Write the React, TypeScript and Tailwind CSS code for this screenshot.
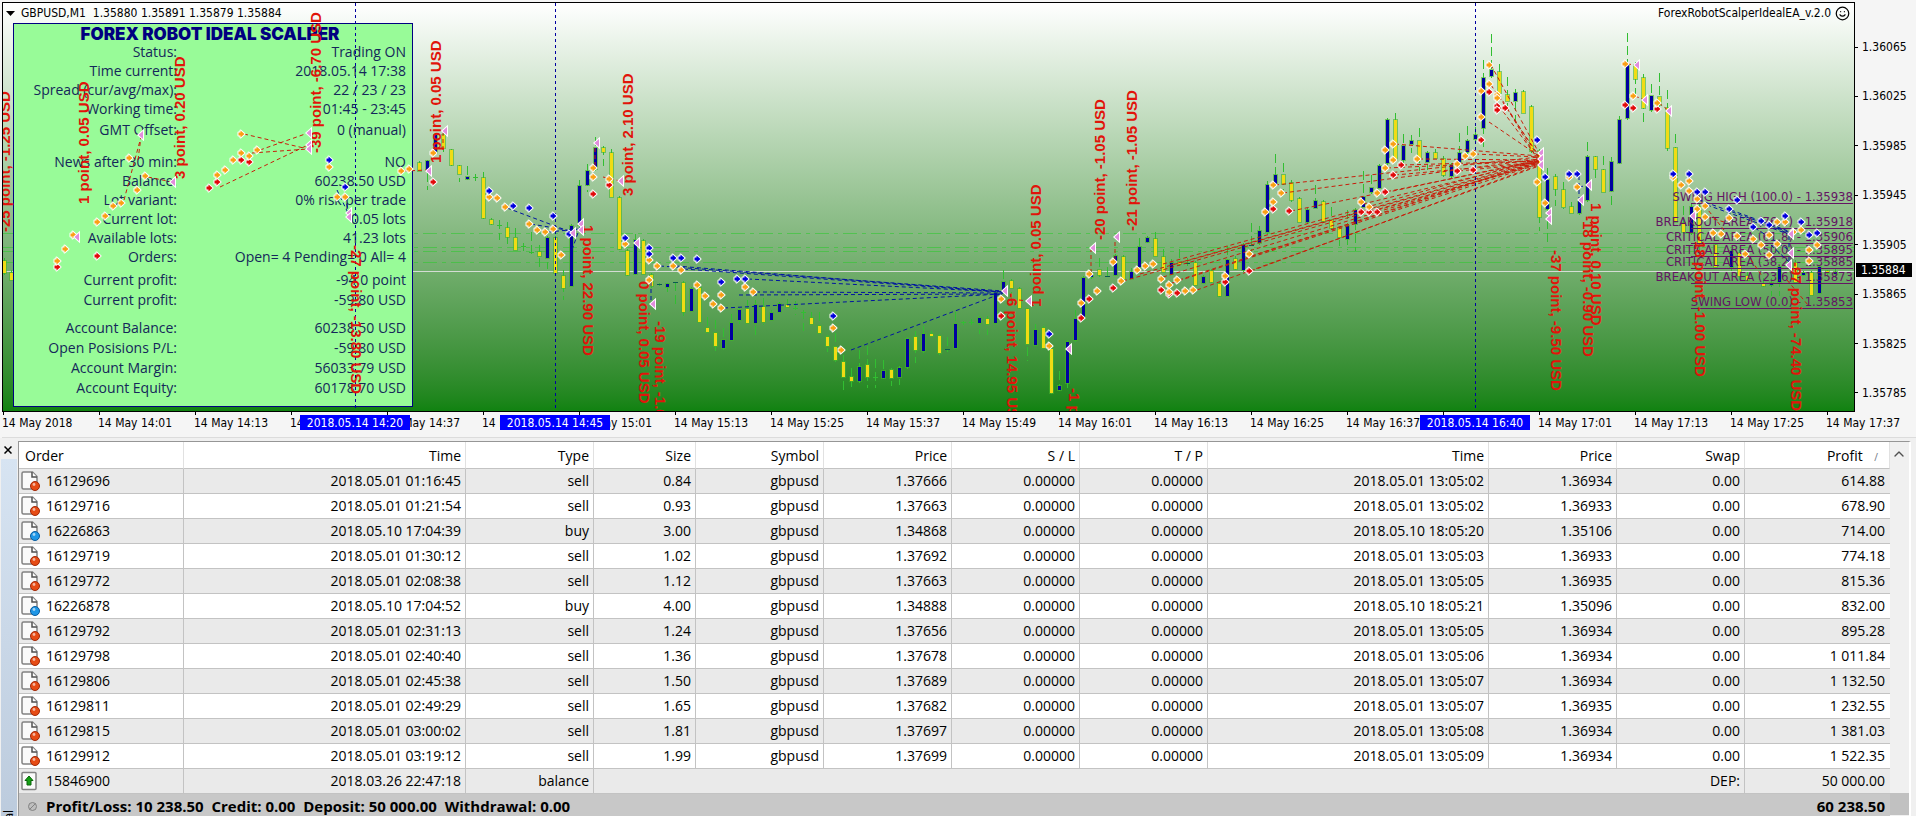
import { ChevronUp, Smile } from 'lucide-react';

type Candle = [x: number, high: number, top: number, bottom: number, low: number, up: 0 | 1];
type Point = [x: number, y: number];
type Segment = [x1: number, y1: number, x2: number, y2: number];

const candles: Candle[] = [
  [4, 258, 261, 273, 275, 0], [11, 270, 273, 280, 282, 0],
  [419, 161, 163, 171, 172, 0], [427, 160, 161, 170, 190, 1], [435, 133, 135, 153, 156, 1], [443, 130, 135, 148, 153, 0],
  [451, 149, 150, 165, 166, 0], [459, 165, 166, 174, 182, 0], [467, 166, 177, 179, 180, 1], [475, 174, 177, 178, 181, 0],
  [483, 172, 178, 218, 219, 0], [491, 218, 220, 224, 225, 0], [499, 220, 225, 226, 240, 0], [507, 222, 228, 237, 246, 0],
  [515, 228, 238, 250, 251, 0], [523, 243, 246, 247, 251, 0], [531, 232, 252, 253, 254, 0], [539, 245, 252, 256, 271, 0],
  [547, 236, 238, 258, 269, 1], [555, 236, 238, 273, 276, 0], [563, 270, 276, 288, 300, 0], [571, 224, 226, 286, 288, 1],
  [579, 180, 186, 225, 227, 1], [587, 164, 171, 185, 192, 1], [595, 137, 148, 169, 171, 1], [603, 146, 148, 152, 166, 0],
  [611, 149, 153, 197, 199, 0], [619, 196, 198, 249, 250, 0], [627, 249, 251, 275, 276, 0], [635, 234, 240, 274, 275, 1],
  [643, 239, 241, 274, 275, 0], [651, 273, 275, 286, 288, 0], [659, 283, 284, 285, 286, 1], [667, 283, 284, 287, 296, 1],
  [675, 282, 282, 283, 305, 1], [683, 281, 283, 312, 316, 0], [691, 287, 289, 311, 312, 1], [699, 286, 288, 322, 324, 0],
  [707, 317, 328, 332, 333, 0], [715, 320, 333, 346, 351, 0], [723, 328, 340, 348, 354, 1], [731, 314, 323, 340, 341, 1],
  [739, 308, 310, 320, 324, 1], [747, 300, 309, 323, 326, 0], [755, 300, 305, 323, 335, 1], [763, 298, 307, 322, 325, 0],
  [771, 310, 313, 320, 322, 1], [779, 302, 304, 312, 314, 1], [787, 299, 305, 307, 308, 0], [795, 301, 308, 309, 315, 0],
  [803, 310, 312, 313, 331, 0], [811, 312, 318, 324, 325, 0], [819, 312, 326, 333, 334, 0], [827, 335, 337, 346, 352, 0],
  [835, 333, 347, 360, 362, 0], [843, 355, 362, 377, 393, 0], [851, 368, 377, 381, 387, 0], [859, 350, 367, 381, 383, 1],
  [867, 346, 365, 377, 388, 0], [875, 359, 377, 378, 388, 0], [883, 360, 371, 378, 379, 1], [891, 368, 370, 378, 386, 0],
  [899, 366, 368, 377, 385, 1], [907, 337, 339, 367, 369, 1], [915, 331, 337, 350, 363, 0], [923, 326, 334, 351, 353, 1],
  [931, 331, 334, 336, 337, 0], [939, 334, 336, 353, 355, 0], [947, 337, 349, 350, 352, 1], [955, 312, 324, 348, 350, 1],
  [963, 321, 322, 323, 325, 0], [971, 319, 322, 323, 325, 0], [979, 316, 318, 323, 334, 1], [987, 316, 319, 324, 335, 0],
  [995, 291, 293, 323, 324, 1], [1003, 270, 282, 292, 294, 1], [1011, 279, 281, 288, 300, 0], [1019, 287, 289, 308, 310, 0],
  [1027, 308, 309, 344, 361, 0], [1035, 324, 330, 345, 347, 1], [1043, 326, 328, 348, 350, 0], [1051, 347, 349, 393, 394, 0],
  [1059, 371, 386, 390, 391, 1], [1067, 340, 342, 383, 389, 1], [1075, 310, 319, 340, 342, 1], [1083, 276, 278, 317, 320, 1],
  [1091, 270, 273, 277, 279, 1], [1099, 258, 270, 275, 277, 0], [1107, 267, 276, 277, 278, 1], [1115, 254, 256, 275, 277, 1],
  [1123, 255, 257, 279, 281, 0], [1131, 268, 272, 279, 280, 1], [1139, 238, 247, 267, 270, 1], [1147, 236, 238, 242, 243, 1],
  [1155, 232, 239, 256, 258, 0], [1163, 249, 257, 272, 274, 0], [1171, 259, 263, 274, 275, 1], [1179, 249, 262, 264, 266, 0],
  [1187, 258, 263, 264, 266, 1], [1195, 261, 263, 285, 286, 0], [1203, 275, 277, 283, 284, 1], [1211, 269, 271, 282, 283, 0],
  [1219, 282, 284, 296, 297, 0], [1227, 246, 260, 296, 297, 1], [1235, 256, 259, 269, 270, 0], [1243, 243, 245, 270, 272, 1],
  [1251, 223, 245, 246, 252, 1], [1259, 226, 231, 243, 245, 1], [1267, 181, 185, 232, 234, 1], [1275, 154, 175, 184, 186, 1],
  [1283, 163, 175, 184, 190, 0], [1291, 180, 183, 200, 202, 0], [1299, 197, 199, 222, 223, 0], [1307, 208, 210, 222, 224, 1],
  [1315, 185, 201, 208, 210, 1], [1323, 200, 202, 221, 222, 0], [1331, 207, 220, 228, 230, 0], [1339, 227, 228, 237, 246, 0],
  [1347, 210, 226, 239, 250, 1], [1355, 208, 210, 224, 251, 1], [1363, 171, 197, 207, 209, 1], [1371, 175, 188, 192, 194, 1],
  [1379, 164, 166, 188, 190, 1], [1387, 118, 120, 163, 165, 1], [1395, 113, 120, 160, 162, 0], [1403, 134, 146, 160, 166, 1],
  [1411, 135, 141, 144, 153, 1], [1419, 128, 141, 159, 171, 0], [1427, 151, 153, 162, 170, 1], [1435, 149, 153, 158, 162, 0],
  [1443, 156, 159, 175, 177, 0], [1451, 163, 165, 176, 178, 1], [1459, 133, 153, 162, 166, 1], [1467, 126, 141, 152, 154, 1],
  [1475, 127, 135, 139, 141, 1], [1483, 60, 78, 128, 148, 1], [1491, 34, 70, 76, 78, 1], [1499, 64, 72, 93, 96, 0],
  [1507, 77, 95, 101, 106, 0], [1515, 89, 93, 101, 122, 1], [1523, 90, 92, 113, 115, 0], [1531, 105, 107, 151, 153, 0],
  [1539, 149, 151, 217, 231, 0], [1547, 168, 180, 209, 245, 1], [1555, 174, 177, 189, 206, 0], [1563, 182, 190, 207, 209, 0],
  [1571, 202, 207, 213, 215, 0], [1579, 198, 201, 213, 215, 1], [1587, 142, 157, 200, 202, 1], [1595, 156, 157, 169, 182, 0],
  [1603, 156, 170, 192, 194, 0], [1611, 157, 162, 191, 208, 1], [1619, 116, 120, 163, 166, 1], [1627, 33, 65, 118, 120, 1],
  [1635, 62, 65, 79, 95, 0], [1643, 74, 78, 108, 125, 0], [1651, 84, 96, 110, 112, 1], [1659, 73, 97, 105, 107, 0],
  [1667, 90, 108, 148, 154, 0], [1675, 134, 148, 222, 224, 0], [1683, 206, 223, 232, 233, 0], [1691, 204, 207, 233, 235, 1],
  [1699, 203, 207, 243, 260, 0], [1715, 243, 245, 267, 268, 0], [1731, 249, 251, 267, 276, 1], [1739, 250, 253, 276, 280, 0],
  [1747, 272, 276, 280, 282, 0], [1763, 278, 284, 286, 290, 0], [1771, 278, 283, 285, 296, 1], [1779, 265, 267, 282, 296, 1],
  [1795, 260, 263, 282, 284, 0], [1803, 271, 273, 275, 276, 1], [1811, 271, 273, 295, 296, 0], [1819, 265, 267, 293, 294, 1],
  [1827, 270, 271, 273, 277, 0], [1835, 269, 272, 274, 278, 1],
];

const orangeArrows: Point[] = [
  [241, 134], [129, 158], [145, 176], [137, 190], [121, 203], [113, 206], [105, 216], [97, 222], [73, 235], [65, 249], [57, 261],
  [241, 153], [249, 156], [257, 150], [233, 160], [225, 170], [217, 175], [329, 167], [337, 197], [345, 197], [401, 171],
  [409, 169], [433, 153], [489, 197], [497, 198], [505, 207], [529, 224], [537, 230], [545, 232], [553, 229], [561, 255],
  [593, 168], [593, 177], [609, 179], [625, 244], [649, 260], [657, 266], [673, 266], [681, 270], [649, 280], [697, 285],
  [705, 296], [713, 304], [721, 295], [721, 308], [745, 287], [753, 292], [833, 328], [841, 350], [1001, 299], [1049, 346],
  [1081, 303], [1089, 274], [1097, 291], [1113, 262], [1121, 281], [1137, 270], [1145, 266], [1153, 264], [1161, 279],
  [1169, 285], [1177, 280], [1169, 292], [1185, 291], [1193, 290], [1249, 254], [1225, 276], [1265, 212], [1273, 185],
  [1281, 193], [1273, 202], [1361, 202], [1369, 207], [1377, 193], [1385, 150], [1393, 144], [1393, 160], [1385, 168],
  [1417, 159], [1457, 164], [1465, 156], [1473, 154], [1481, 91], [1481, 117], [1489, 65], [1489, 84], [1497, 95], [1497, 98],
  [1537, 182], [1545, 203], [1569, 177], [1577, 187], [1625, 64], [1633, 96], [1657, 103], [1673, 177], [1681, 185],
  [1689, 181], [1689, 191], [1697, 199], [1705, 206], [1697, 209], [1705, 217], [1713, 233], [1721, 234], [1729, 218],
  [1777, 222], [1785, 222], [1769, 235], [1753, 239], [1761, 245], [1793, 232], [1801, 230], [1809, 250], [1809, 261],
  [1817, 245], [1777, 244], [1769, 255], [1745, 254], [1737, 236],
];

const redArrows: Point[] = [
  [57, 267], [97, 256], [241, 160], [249, 162], [217, 182], [209, 188], [433, 182], [593, 194], [609, 185], [1001, 316],
  [1081, 318], [1089, 299], [1113, 288], [1161, 290], [1169, 294], [1177, 293], [1225, 282], [1249, 271], [1273, 209],
  [1289, 211], [1361, 212], [1369, 212], [1377, 212], [1385, 192], [1393, 175], [1401, 165], [1457, 171], [1473, 170],
  [1481, 140], [1489, 92], [1497, 106], [1497, 110], [1505, 108], [1625, 105], [1633, 108], [1657, 109],
];

const blueArrows: Point[] = [
  [329, 160], [345, 187], [489, 191], [513, 206], [529, 208], [553, 216], [569, 234], [625, 238], [649, 248], [649, 254],
  [673, 258], [681, 258], [697, 259], [721, 282], [737, 279], [745, 279], [833, 316], [1049, 334], [1537, 140], [1545, 177],
  [1569, 174], [1577, 174], [1673, 174], [1689, 174], [1697, 192], [1705, 192], [1737, 200], [1729, 209], [1761, 221],
  [1769, 225], [1753, 227], [1785, 216], [1801, 222], [1809, 235], [1817, 233],
];

const exits: Point[] = [
  [141, 135], [173, 182], [77, 237], [309, 133], [309, 145], [309, 149], [349, 213], [349, 217], [429, 171], [445, 131],
  [597, 143], [621, 181], [573, 233], [581, 224], [581, 230], [637, 243], [653, 304], [1005, 291], [1029, 301], [1093, 248],
  [1117, 237], [1069, 349], [1541, 153], [1541, 159], [1541, 165], [1549, 213], [1549, 219], [1589, 185], [1581, 200],
  [1637, 65], [1645, 100], [1669, 111], [1693, 216], [1791, 234], [1791, 253], [1789, 265],
];

const sellLines: Segment[] = [
  [124, 200, 141, 137], [138, 160, 141, 137], [148, 177, 172, 182], [244, 134, 308, 149], [260, 150, 308, 133],
  [252, 153, 308, 149], [220, 187, 308, 145], [404, 171, 428, 170], [595, 166, 595, 146], [603, 177, 620, 181],
  [1019, 300, 1028, 301], [1091, 273, 1091, 250], [1115, 260, 1115, 240], [443, 150, 443, 133],
  [1123, 281, 1539, 164], [1140, 274, 1539, 162], [1163, 264, 1539, 159], [1171, 265, 1539, 161], [1163, 277, 1539, 163],
  [1172, 283, 1539, 164], [1179, 280, 1539, 162], [1197, 290, 1539, 166], [1251, 271, 1539, 165], [1275, 185, 1539, 157],
  [1283, 193, 1539, 159], [1291, 211, 1539, 161], [1251, 256, 1539, 161], [1363, 204, 1539, 161], [1371, 212, 1539, 163],
  [1379, 194, 1539, 160], [1395, 144, 1539, 156], [1387, 168, 1539, 161], [1395, 175, 1539, 162], [1403, 165, 1539, 161],
  [1419, 159, 1539, 160], [1459, 171, 1539, 163], [1475, 154, 1539, 157], [1491, 65, 1539, 153], [1491, 85, 1539, 156],
  [1499, 95, 1539, 158], [1499, 106, 1539, 160], [1507, 108, 1539, 162], [1489, 122, 1539, 156],
  [1627, 64, 1637, 65], [1635, 96, 1645, 100], [1659, 103, 1669, 111], [1700, 200, 1724, 230], [1747, 254, 1762, 276],
  [1787, 280, 1808, 305], [1707, 217, 1724, 222],
];

const buyLines: Segment[] = [
  [337, 190, 348, 213], [345, 197, 349, 213], [507, 208, 571, 232], [531, 224, 572, 231], [548, 232, 580, 229],
  [572, 250, 580, 227], [660, 266, 1003, 291], [676, 266, 1003, 292], [684, 269, 1003, 292], [748, 279, 1003, 292],
  [739, 295, 1003, 294], [756, 292, 1003, 293], [724, 308, 1003, 294], [851, 350, 1003, 293], [651, 282, 651, 302],
  [1579, 176, 1579, 198], [1579, 187, 1589, 185], [1699, 200, 1791, 233], [1707, 205, 1791, 235], [1731, 210, 1791, 232],
  [1763, 222, 1789, 234], [1755, 228, 1789, 250], [1789, 236, 1789, 265], [1771, 245, 1789, 262],
];

const risingNotes: [number, number, string][] = [
  [10, 232, '-25 point, -1.25 USD'], [89, 204, '1 point, 0.05 USD'], [185, 179, '3 point, 0.20 USD'],
  [321, 153, '-39 point, -6.70 USD'], [441, 163, '1 point, 0.05 USD'], [633, 196, '3 point, 2.10 USD'],
  [1041, 307, '1 point, 0.05 USD'], [1105, 240, '-20 point, -1.05 USD'], [1137, 231, '-21 point, -1.05 USD'],
];

const fallingNotes: [number, number, string][] = [
  [351, 245, '-27 point, -13.80 USD'], [583, 225, '1 point, 22.90 USD'], [639, 281, '0 point, 0.05 USD'],
  [655, 321, '-19 point, -1.00 USD'], [1007, 293, '-6 point, 14.95 USD'], [1069, 388, '-1 point, -0.05 USD'],
  [1551, 250, '-37 point, -9.50 USD'], [1583, 216, '-18 point, -0.90 USD'], [1591, 203, '1 point, 0.10 USD'],
  [1695, 236, '-18 point, -1.00 USD'], [1791, 262, '-97 point, -74.40 USD'],
];

const levels: [textY: number, lineY: number, label: string][] = [
  [201, 203, 'SWING HIGH (100.0) - 1.35938'],
  [226, 228, 'BREAKOUT AREA (76.4) - 1.35918'],
  [241, 243, 'CRITICAL AREA (61.8) - 1.35906'],
  [254, 256, 'CRITICAL AREA (50.0) - 1.35895'],
  [266, 268, 'CRITICAL AREA (38.2) - 1.35885'],
  [281, 283, 'BREAKOUT AREA (23.6) - 1.35873'],
  [306, 308, 'SWING LOW (0.0) - 1.35853'],
];

const prices = ['1.36065', '1.36025', '1.35985', '1.35945', '1.35905', '1.35865', '1.35825', '1.35785'];

const times = [
  '14 May 2018', '14 May 14:01', '14 May 14:13', '14 May 14:25', '14 May 14:37', '14 May 14:49', '14 May 15:01',
  '14 May 15:13', '14 May 15:25', '14 May 15:37', '14 May 15:49', '14 May 16:01', '14 May 16:13', '14 May 16:25',
  '14 May 16:37', '14 May 16:49', '14 May 17:01', '14 May 17:13', '14 May 17:25', '14 May 17:37',
];

const timeMarks = [
  { x: 355, label: '2018.05.14 14:20' },
  { x: 555, label: '2018.05.14 14:45' },
  { x: 1475, label: '2018.05.14 16:40' },
];

const statusGroups: { className: string; rows: [string, string][] }[] = [
  {
    className: 'leading-[19px]',
    rows: [
      ['Status:', 'Trading ON'],
      ['Time current:', '2018.05.14 17:38'],
      ['Spread (cur/avg/max):', '22 / 23 / 23'],
      ['Working time:', '01:45 - 23:45'],
    ],
  },
  { className: 'mt-0.5 leading-[19px]', rows: [['GMT Offset:', '0 (manual)']] },
  {
    className: 'mt-[13px] leading-[19px]',
    rows: [
      ['News after 30 min:', 'NO'],
      ['Balance:', '60238.50 USD'],
      ['Lot variant:', '0% risk per trade'],
      ['Current lot:', '0.05 lots'],
      ['Available lots:', '41.23 lots'],
      ['Orders:', 'Open= 4 Pending= 0 All= 4'],
    ],
  },
  {
    className: 'mt-1 leading-5',
    rows: [
      ['Current profit:', '-94.0 point'],
      ['Current profit:', '-59.80 USD'],
    ],
  },
  {
    className: 'mt-2 leading-5',
    rows: [
      ['Account Balance:', '60238.50 USD'],
      ['Open Posisions P/L:', '-59.80 USD'],
      ['Account Margin:', '56033.79 USD'],
      ['Account Equity:', '60178.70 USD'],
    ],
  },
];

const columns = [
  { title: 'Order', width: 'w-[165px]' },
  { title: 'Time', width: 'w-[282px]' },
  { title: 'Type', width: 'w-[128px]' },
  { title: 'Size', width: 'w-[102px]' },
  { title: 'Symbol', width: 'w-[128px]' },
  { title: 'Price', width: 'w-[128px]' },
  { title: 'S / L', width: 'w-[128px]' },
  { title: 'T / P', width: 'w-[128px]' },
  { title: 'Time', width: 'w-[281px]' },
  { title: 'Price', width: 'w-[128px]' },
  { title: 'Swap', width: 'w-[128px]' },
];

interface Order {
  id: string;
  opened: string;
  type: 'sell' | 'buy';
  size: string;
  openPrice: string;
  closed: string;
  closePrice: string;
  profit: string;
}

const orders: Order[] = [
  { id: '16129696', opened: '2018.05.01 01:16:45', type: 'sell', size: '0.84', openPrice: '1.37666', closed: '2018.05.01 13:05:02', closePrice: '1.36934', profit: '614.88' },
  { id: '16129716', opened: '2018.05.01 01:21:54', type: 'sell', size: '0.93', openPrice: '1.37663', closed: '2018.05.01 13:05:02', closePrice: '1.36933', profit: '678.90' },
  { id: '16226863', opened: '2018.05.10 17:04:39', type: 'buy', size: '3.00', openPrice: '1.34868', closed: '2018.05.10 18:05:20', closePrice: '1.35106', profit: '714.00' },
  { id: '16129719', opened: '2018.05.01 01:30:12', type: 'sell', size: '1.02', openPrice: '1.37692', closed: '2018.05.01 13:05:03', closePrice: '1.36933', profit: '774.18' },
  { id: '16129772', opened: '2018.05.01 02:08:38', type: 'sell', size: '1.12', openPrice: '1.37663', closed: '2018.05.01 13:05:05', closePrice: '1.36935', profit: '815.36' },
  { id: '16226878', opened: '2018.05.10 17:04:52', type: 'buy', size: '4.00', openPrice: '1.34888', closed: '2018.05.10 18:05:21', closePrice: '1.35096', profit: '832.00' },
  { id: '16129792', opened: '2018.05.01 02:31:13', type: 'sell', size: '1.24', openPrice: '1.37656', closed: '2018.05.01 13:05:05', closePrice: '1.36934', profit: '895.28' },
  { id: '16129798', opened: '2018.05.01 02:40:40', type: 'sell', size: '1.36', openPrice: '1.37678', closed: '2018.05.01 13:05:06', closePrice: '1.36934', profit: '1 011.84' },
  { id: '16129806', opened: '2018.05.01 02:45:38', type: 'sell', size: '1.50', openPrice: '1.37689', closed: '2018.05.01 13:05:07', closePrice: '1.36934', profit: '1 132.50' },
  { id: '16129811', opened: '2018.05.01 02:49:29', type: 'sell', size: '1.65', openPrice: '1.37682', closed: '2018.05.01 13:05:07', closePrice: '1.36935', profit: '1 232.55' },
  { id: '16129815', opened: '2018.05.01 03:00:02', type: 'sell', size: '1.81', openPrice: '1.37697', closed: '2018.05.01 13:05:08', closePrice: '1.36934', profit: '1 381.03' },
  { id: '16129912', opened: '2018.05.01 03:19:12', type: 'sell', size: '1.99', openPrice: '1.37699', closed: '2018.05.01 13:05:09', closePrice: '1.36934', profit: '1 522.35' },
];

function CandleLayer() {
  return (
    <svg className="absolute inset-0 h-full w-full" shapeRendering="crispEdges">
      <g stroke="#32c832" strokeWidth={1} strokeDasharray="14 5 4 5" opacity={0.6}>
        {[232, 246, 250, 261].map((y) => (
          <line key={y} x1={0} x2="100%" y1={y - 2} y2={y - 2} />
        ))}
      </g>
      <line x1={0} x2="100%" y1={268} y2={268} stroke="#d4dcd4" />
      <g transform="translate(-3 -3)">
        {candles.map(([x, high, top, bottom, low, up]) => (
          <g key={x}>
            <line x1={x + 0.5} x2={x + 0.5} y1={high} y2={low} stroke="#32be32" strokeDasharray="9 4" />
            {bottom - top <= 1 ? (
              <rect x={x - 2} y={top} width={5} height={1} fill={up ? '#0a5a50' : '#32be32'} />
            ) : (
              <>
                <rect x={x - 2} y={top - 1} width={5} height={bottom - top + 2} fill="#46b428" opacity={0.6} />
                <rect x={x - 1} y={top} width={3} height={bottom - top} fill={up ? '#0000a0' : '#f0dc14'} />
              </>
            )}
          </g>
        ))}
      </g>
    </svg>
  );
}

function Arrows({ points, color }: { points: Point[]; color: string }) {
  return (
    <g fill={color} stroke="#fff" strokeWidth={2} paintOrder="stroke" strokeLinejoin="round">
      {points.map(([x, y], i) => (
        <path key={i} transform={`translate(${x} ${y})`} d="M-2.5-1.5H-.5V-3.5L3.5 0-.5 3.5V1.5H-2.5Z" />
      ))}
    </g>
  );
}

function DealLayer() {
  return (
    <svg className="pointer-events-none absolute inset-0 h-full w-full">
      <g transform="translate(-3 -3)">
        <g className="font-['DejaVu_Sans_Condensed','Noto_Sans',sans-serif] text-[13px]" fill="#641464" textAnchor="end">
          {levels.map(([textY, lineY, label]) => (
            <g key={label}>
              <text x={1853} y={textY}>{label}</text>
              <line x1={1691} x2={1853} y1={lineY + 0.5} y2={lineY + 0.5} stroke="#641464" />
            </g>
          ))}
        </g>
        <g stroke="#c81e0a" strokeDasharray="4 3">
          {sellLines.map(([x1, y1, x2, y2], i) => (
            <line key={i} x1={x1} y1={y1} x2={x2} y2={y2} />
          ))}
        </g>
        <g stroke="#0014a0" strokeDasharray="4 3">
          {buyLines.map(([x1, y1, x2, y2], i) => (
            <line key={i} x1={x1} y1={y1} x2={x2} y2={y2} />
          ))}
        </g>
        {timeMarks.map(({ x }) => (
          <line key={x} x1={x + 0.5} x2={x + 0.5} y1={3} y2={408} stroke="#0000a0" strokeDasharray="3 3" />
        ))}
        <g className="font-['Liberation_Sans',Arial,sans-serif] text-[15px] font-bold" fill="#e1140a">
          {risingNotes.map(([x, y, note]) => (
            <text key={x} transform={`translate(${x} ${y}) rotate(-90)`}>{note}</text>
          ))}
          {fallingNotes.map(([x, y, note]) => (
            <text key={x} transform={`translate(${x} ${y}) rotate(90)`}>{note}</text>
          ))}
        </g>
        <Arrows points={redArrows} color="#e10a0a" />
        <Arrows points={orangeArrows} color="#faa014" />
        <Arrows points={blueArrows} color="#0000dc" />
        <g fill="#e18cdc" stroke="#fff" strokeWidth={2} paintOrder="stroke">
          {exits.map(([x, y], i) => (
            <path key={i} transform={`translate(${x} ${y})`} d="M2-4V4L-2.5 0Z" />
          ))}
        </g>
      </g>
    </svg>
  );
}

function StatusPanel() {
  return (
    <section className="absolute left-[10px] top-5 w-[400px] border border-[#000080] bg-[#98fb98] pb-2 pr-[6px] text-sm text-[#14285a]">
      <h2 className="pt-0.5 text-center font-['Inter',sans-serif] text-[17px] font-black leading-4 text-[#000080]">
        FOREX ROBOT IDEAL SCALPER
      </h2>
      {statusGroups.map((group, i) => (
        <dl key={i} className={group.className}>
          {group.rows.map(([label, value], j) => (
            <div key={j} className="flex">
              <dt className="w-[163px] text-right">{label}</dt>
              <dd className="flex-1 text-right">{value}</dd>
            </div>
          ))}
        </dl>
      ))}
    </section>
  );
}

function Chart() {
  return (
    <section className="bg-[#f5f5f5] pl-0.5 pt-0.5 font-['DejaVu_Sans_Condensed','Noto_Sans',sans-serif] text-xs text-black">
      <div className="flex h-[410px]">
        <div className="relative min-w-0 flex-1 overflow-hidden border border-black bg-linear-to-b from-white to-[#108210]">
          <CandleLayer />
          <header className="relative flex h-5 items-center justify-between pr-1">
            <div className="flex items-center gap-1.5">
              <button aria-label="Chart menu" className="pl-[3px]">
                <svg width="9" height="5" viewBox="0 0 9 5">
                  <path d="M0 0H9L4.500 5Z" />
                </svg>
              </button>
              <span className="whitespace-pre">GBPUSD,M1  1.35880 1.35891 1.35879 1.35884</span>
            </div>
            <div className="flex items-center gap-1">
              <span>ForexRobotScalperIdealEA_v.2.0</span>
              <Smile size={15} strokeWidth={2} />
            </div>
          </header>
          <div className="font-['Open_Sans','Noto_Sans',sans-serif]">
            <StatusPanel />
          </div>
          <DealLayer />
        </div>
        <div className="relative flex w-[61px] flex-col justify-between pb-[11px] pt-[37px]">
          {prices.map((price) => (
            <div key={price} className="flex h-4 items-center gap-1">
              <span className="h-px w-[3px] bg-black" />
              {price}
            </div>
          ))}
          <div className="absolute left-px top-[261px] h-[14px] w-14 bg-black pl-[5px] leading-[14px] text-white">1.35884</div>
        </div>
      </div>
      <div className="relative flex h-[26px] overflow-hidden border-b border-[#dcdcdc]">
        {times.map((time) => (
          <div key={time} className="w-24 shrink-0 pl-px">
            <div className="h-[3px] w-px bg-black" />
            <div className="-ml-px whitespace-nowrap leading-[17px]">{time}</div>
          </div>
        ))}
        {timeMarks.map(({ x, label }) => (
          <div
            key={x}
            className="absolute top-[3px] h-[15px] w-[110px] bg-[#0000ff] text-center leading-[16px] text-white"
            style={{ left: x - 57 }}
          >
            {label}
          </div>
        ))}
      </div>
    </section>
  );
}

function OrderIcon({ type }: { type: Order['type'] }) {
  const [fill, edge] = type === 'sell' ? ['#e64b14', '#a02808'] : ['#1e96e6', '#0a5a9b'];
  return (
    <svg width="19" height="20" viewBox="0 0 19 20" className="shrink-0">
      <path d="M2.500 1H11.500L16 5.500V18H2.500Q1 18 1 16.500V2.500Q1 1 2.500 1Z" fill="#fafafa" stroke="#828282" strokeWidth="1.500" />
      <path d="M11 1V6H16" fill="#fff" stroke="#505050" strokeWidth="1.500" />
      <circle cx="14" cy="15" r="4.500" fill={fill} stroke={edge} />
      <circle cx="13" cy="13.500" r="1.400" fill="#fff" opacity=".6" />
    </svg>
  );
}

function BalanceIcon() {
  return (
    <svg width="19" height="20" viewBox="0 0 19 20" className="shrink-0">
      <rect x="1" y="1.500" width="14" height="17" rx="1" fill="#fafafa" stroke="#828282" strokeWidth="1.500" />
      <path d="M8 5L12 9.500H10V14H6V9.500H4Z" fill="#14a014" stroke="#0a640a" />
    </svg>
  );
}

function Terminal() {
  const cell = 'border-r border-[#c3c3c3] pr-1';

  return (
    <section className="flex bg-[#f0f0f0] pt-[3px] font-['Open_Sans','Noto_Sans',sans-serif] text-sm text-black">
      <aside className="flex w-[18px] shrink-0 flex-col items-center">
        <button aria-label="Close" className="flex h-[18px] w-full items-center justify-center pr-0.5">
          <svg width="8" height="8" viewBox="0 0 8 8" stroke="#000" strokeWidth="1.500">
            <path d="M.5 .5L7.500 7.500M7.500 .5L.5 7.500" />
          </svg>
        </button>
        <div className="mr-px flex w-4 flex-1 items-end justify-center overflow-hidden bg-linear-to-b from-[#d7e4f2] to-[#bccbdd]">
          <span className="-mb-9 rotate-180 font-['DejaVu_Sans_Condensed','Noto_Sans',sans-serif] text-xs leading-4 [writing-mode:vertical-rl]">
            Terminal
          </span>
        </div>
      </aside>
      <div className="min-w-0 flex-1 border-l border-t border-[#969696]">
        <table className="w-full table-fixed border-separate border-spacing-0 text-right">
          <thead className="bg-white">
            <tr className="h-[27px]">
              {columns.map(({ title, width }, i) => (
                <th
                  key={i}
                  className={`${width} border-b border-r border-b-[#c3c3c3] border-r-[#e1e1e1] pt-0.5 font-normal ${i === 0 ? 'pl-1.5 text-left' : 'pr-1'}`}
                >
                  {title}
                </th>
              ))}
              <th className="w-[145px] border-b border-r border-b-[#c3c3c3] border-r-[#e1e1e1] pt-0.5 font-normal">
                <button className="pr-[11px]">
                  Profit <span className="pl-2 text-[10px] text-gray-500">/</span>
                </button>
              </th>
            </tr>
          </thead>
          <tbody className="[&_td]:border-b [&_td]:border-b-[#c3c3c3]">
            {orders.map((order) => (
              <tr key={order.id} className="h-[25px] odd:bg-[#eaeaea] even:bg-white">
                <td className={cell}>
                  <div className="flex items-center gap-1.5 pl-0.5">
                    <OrderIcon type={order.type} />
                    {order.id}
                  </div>
                </td>
                <td className={cell}>{order.opened}</td>
                <td className={cell}>{order.type}</td>
                <td className={cell}>{order.size}</td>
                <td className={cell}>gbpusd</td>
                <td className={cell}>{order.openPrice}</td>
                <td className={cell}>0.00000</td>
                <td className={cell}>0.00000</td>
                <td className={cell}>{order.closed}</td>
                <td className={cell}>{order.closePrice}</td>
                <td className={cell}>0.00</td>
                <td className="pr-[5px]">{order.profit}</td>
              </tr>
            ))}
            <tr className="h-[25px] bg-[#eaeaea]">
              <td className={cell}>
                <div className="flex items-center gap-1.5 pl-0.5">
                  <BalanceIcon />
                  15846900
                </div>
              </td>
              <td className={cell}>2018.03.26 22:47:18</td>
              <td className={cell}>balance</td>
              <td colSpan={8} className={cell}>DEP:</td>
              <td className="pr-[5px]">50 000.00</td>
            </tr>
          </tbody>
          <tfoot className="bg-[#c8c8c8] text-[15px] font-bold">
            <tr className="h-[25px]">
              <td colSpan={11}>
                <div className="flex items-center gap-2 pl-2">
                  <svg width="11" height="11" viewBox="0 0 11 11" fill="#bebebe" stroke="#828282">
                    <circle cx="5.500" cy="5.500" r="4" />
                    <path d="M2.500 8.500L8.500 2.500" />
                  </svg>
                  <span className="whitespace-pre">Profit/Loss: 10 238.50  Credit: 0.00  Deposit: 50 000.00  Withdrawal: 0.00</span>
                </div>
              </td>
              <td className="pr-[5px]">60 238.50</td>
            </tr>
          </tfoot>
        </table>
      </div>
      <div className="flex w-[22px] shrink-0 flex-col items-center border-r-2 border-t border-r-white border-t-[#969696]">
        <button aria-label="Scroll up" className="flex h-6 items-center">
          <ChevronUp size={16} strokeWidth={2} color="#505050" />
        </button>
        <div className="mb-1 mt-auto h-[22px] w-[19px] bg-[#c1c1c1]" />
      </div>
      <div className="w-[5px] shrink-0" />
    </section>
  );
}

export default function App() {
  return (
    <main className="h-screen overflow-hidden bg-[#f0f0f0]">
      <Chart />
      <Terminal />
    </main>
  );
}
